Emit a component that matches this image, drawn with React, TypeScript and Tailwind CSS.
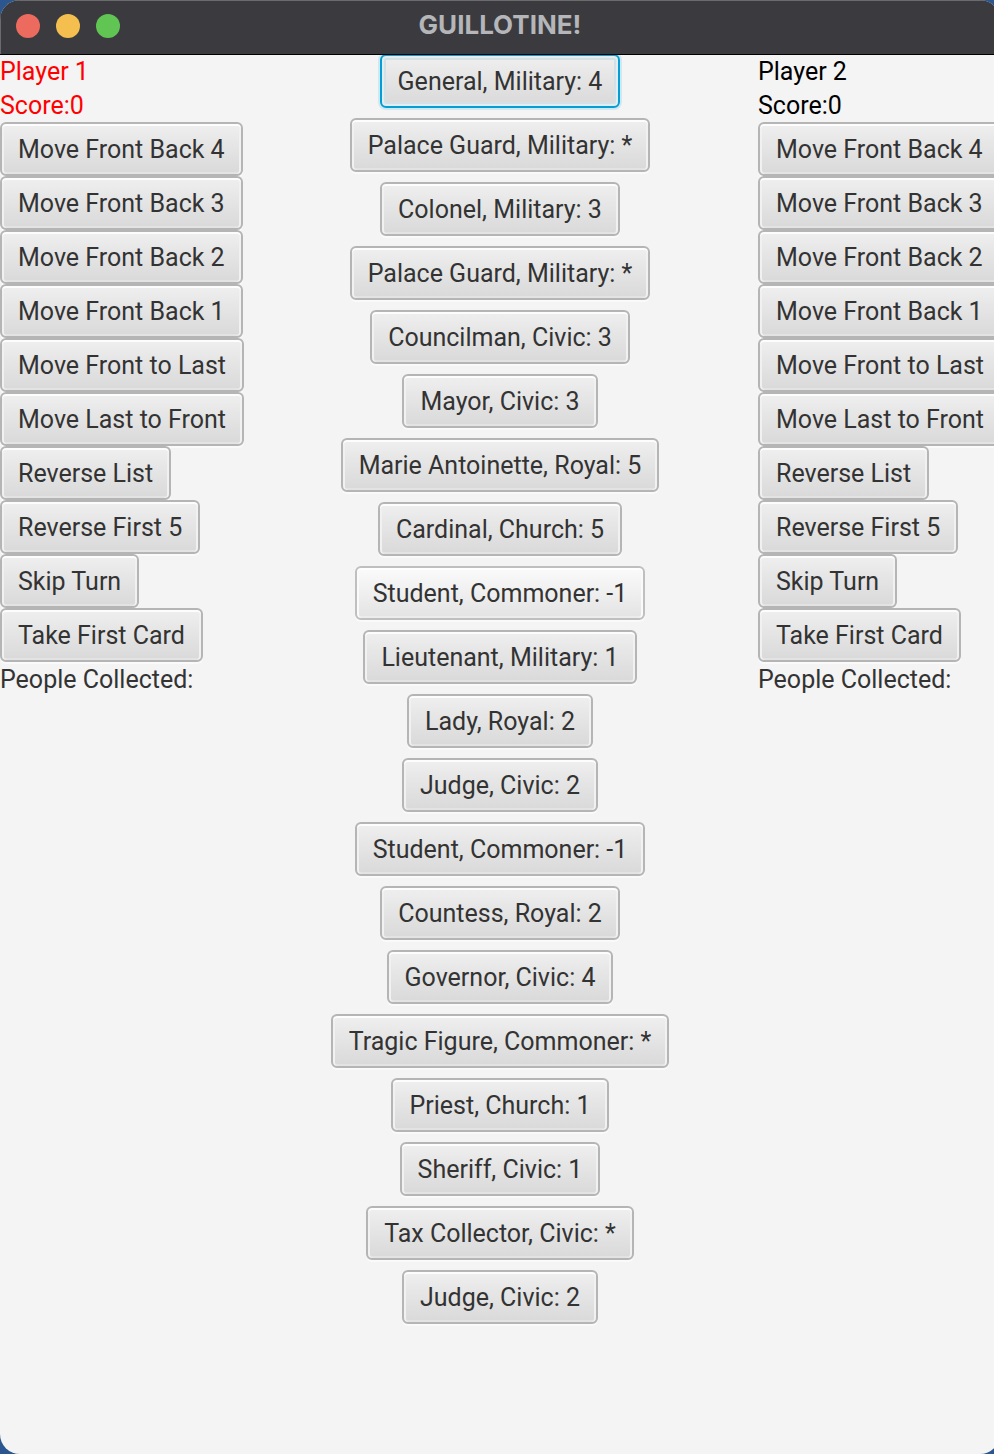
const cards = [
  "General, Military: 4",
  "Palace Guard, Military: *",
  "Colonel, Military: 3",
  "Palace Guard, Military: *",
  "Councilman, Civic: 3",
  "Mayor, Civic: 3",
  "Marie Antoinette, Royal: 5",
  "Cardinal, Church: 5",
  "Student, Commoner: -1",
  "Lieutenant, Military: 1",
  "Lady, Royal: 2",
  "Judge, Civic: 2",
  "Student, Commoner: -1",
  "Countess, Royal: 2",
  "Governor, Civic: 4",
  "Tragic Figure, Commoner: *",
  "Priest, Church: 1",
  "Sheriff, Civic: 1",
  "Tax Collector, Civic: *",
  "Judge, Civic: 2",
];

const actions = [
  "Move Front Back 4",
  "Move Front Back 3",
  "Move Front Back 2",
  "Move Front Back 1",
  "Move Front to Last",
  "Move Last to Front",
  "Reverse List",
  "Reverse First 5",
  "Skip Turn",
  "Take First Card",
];

const looks = {
  normal:
    "border-[#b5b5b5] from-[#efefef] to-[#d9d9d9] shadow-[inset_0_2px_0_#fdfdfd,inset_2px_0_0_#f1f1f1,inset_-2px_0_0_#f1f1f1,inset_0_-2px_0_#e3e3e3,0_2px_0_#fafafa]",
  hover:
    "border-[#bfbfbf] from-[#fbfbfb] to-[#e3e3e3] shadow-[inset_0_2px_0_#ffffff,inset_2px_0_0_#fafafa,inset_-2px_0_0_#fafafa,inset_0_-2px_0_#ececec,0_2px_0_#fafafa]",
  focus:
    "border-[#039ed3] from-[#efefef] to-[#d9d9d9] shadow-[inset_0_0_0_2px_#e2edf1,inset_0_0_0_4px_#d3e0e5,0_0_0_2px_#d0e8f1]",
};

function FxButton({ label, look = "normal" }: { label: string; look?: keyof typeof looks }) {
  return (
    <button
      type="button"
      className={`h-[54px] shrink-0 whitespace-nowrap rounded-md border-2 bg-linear-to-b px-4 pt-0.5 leading-8 text-[#333333] outline-none ${looks[look]}`}
    >
      {label}
    </button>
  );
}

function PlayerPanel({ name, active = false }: { name: string; active?: boolean }) {
  return (
    <section aria-label={name} className="flex w-[242px] shrink-0 flex-col items-start">
      <div className={`h-[68px] pt-px leading-[34px] ${active ? "text-[#ff0000]" : "text-black"}`}>
        <h2>{name}</h2>
        <p>Score:0</p>
      </div>
      {actions.map((action) => (
        <FxButton key={action} label={action} />
      ))}
      <p className="pt-px leading-[34px] text-[#333333]">People Collected:</p>
    </section>
  );
}

export default function App() {
  return (
    <div className="flex min-h-screen overflow-hidden bg-[#2b568f] font-['Roboto','Liberation_Sans',sans-serif] text-[25px]">
      <div className="-mr-[6px] flex grow flex-col overflow-hidden rounded-[20px] bg-[#f4f4f4]">
        <header className="relative z-10 flex h-[54px] shrink-0 items-center bg-[#3b3b3f] px-4 pb-0.5 shadow-[inset_1px_1px_0_#6b6b6e,0_1px_0_#000000]">
          <div className="flex flex-1 gap-4">
            <button type="button" aria-label="Close" className="size-6 rounded-full bg-[#ed6a5e]" />
            <button type="button" aria-label="Minimize" className="size-6 rounded-full bg-[#f5bf4f]" />
            <button type="button" aria-label="Zoom" className="size-6 rounded-full bg-[#61c554]" />
          </div>
          <h1 className="pb-1 font-['Inter','Liberation_Sans',sans-serif] text-[26px] font-bold text-[#b4b6b9]">
            GUILLOTINE!
          </h1>
          <div className="flex-1" />
        </header>
        <main className="flex items-start">
          <PlayerPanel name="Player 1" active />
          <section aria-label="Line" className="flex flex-1 flex-col items-center gap-[10px]">
            {cards.map((card, i) => (
              <FxButton key={i} label={card} look={i === 0 ? "focus" : i === 8 ? "hover" : "normal"} />
            ))}
          </section>
          <PlayerPanel name="Player 2" />
        </main>
      </div>
    </div>
  );
}
